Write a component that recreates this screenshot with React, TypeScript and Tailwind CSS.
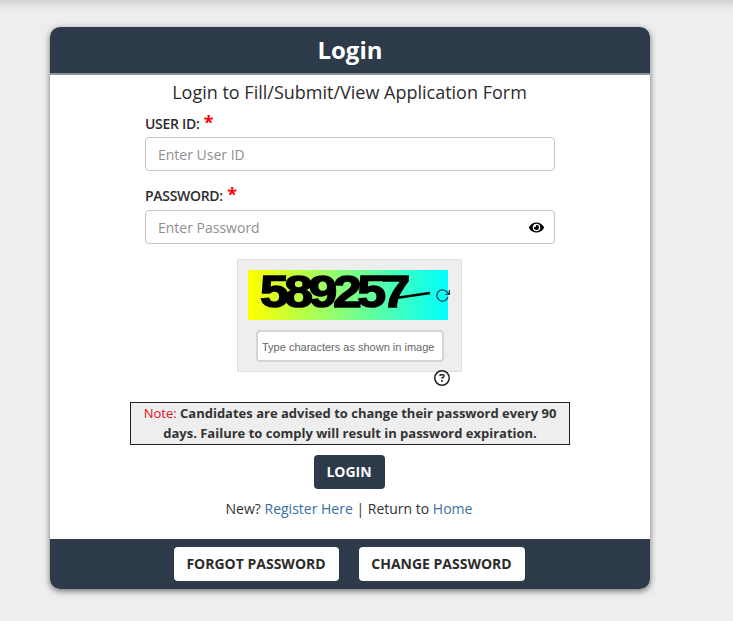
import { FaEye } from 'react-icons/fa';
import { FiRotateCw } from 'react-icons/fi';
import { FaRegCircleQuestion } from 'react-icons/fa6';

export default function App() {
  return (
    <div className="min-h-[621px] overflow-hidden bg-[#eeeeee] font-['Open_Sans',sans-serif] text-[#2b2b2b]">
      <div className="h-[10px] bg-gradient-to-b from-[#d2d2d2] to-[#eeeeee]" />
      <div className="mx-[50px] mt-[17px] w-[600px] overflow-hidden rounded-[10px] bg-white shadow-[0_2px_6px_rgba(0,0,0,0.55)]">
        <div className="flex h-[48px] items-center justify-center border-b-2 border-[#8b949c] bg-[#2c3a49] text-[24px] font-bold text-white">
          Login
        </div>
        <div className="flex flex-col items-center">
          <h1 className="mt-[4px] mr-[1px] text-[18px] leading-[27px] text-[#2b2b2b]">Login to Fill/Submit/View Application Form</h1>
          <div className="w-[410px]">
            <label className="mt-[3px] block h-[28px] text-[14px] leading-[27px] font-semibold tracking-[-0.3px]">
              USER ID: <span className="ml-px text-[18px] font-bold text-[#ff0000]">*</span>
            </label>
            <div className="flex h-[34px] items-center rounded-[4px] border border-[#c4c4c4] px-3 text-[14px] text-[#8f8f8f]">
              Enter User ID
            </div>
            <label className="mt-[11px] block h-[28px] text-[14px] leading-[25px] font-semibold tracking-[-0.3px]">
              PASSWORD: <span className="ml-px text-[18px] font-bold text-[#ff0000]">*</span>
            </label>
            <div className="flex h-[34px] items-center justify-between rounded-[4px] border border-[#c4c4c4] pr-[10px] pl-3 text-[14px] text-[#8f8f8f]">
              Enter Password
              <FaEye className="text-[15px] text-black" />
            </div>
          </div>
          <div className="mt-[15px] mr-[1px] flex h-[113px] w-[225px] flex-col items-start rounded-[2px] border border-[#dddddd] bg-[#eeeeee] pt-[10px] pl-[10px]">
            <div className="relative flex h-[50px] w-[200px] items-center bg-linear-to-r/srgb from-[#ffff00] to-[#00ffff] pb-[7px] pl-[12px] font-['Liberation_Sans',sans-serif] text-[45px] font-bold text-black">
              <span className="inline-block origin-left scale-x-[1.15] tracking-[-3.9px] [-webkit-text-stroke:1.5px_black]">589257</span>
              <svg className="absolute top-0 left-0" width="200" height="50" viewBox="0 0 200 50">
                <path d="M148 28 L182 23" stroke="#000" strokeWidth="2.5" />
              </svg>
              <FiRotateCw className="absolute top-[18px] left-[187px] text-[15px] text-[#163f4d]" />
            </div>
            <div className="mt-[10px] ml-[8px] flex h-[32px] w-[188px] items-center rounded-[4px] border-2 border-[#d4d4d4] bg-white pt-[3px] pl-[4px] font-['Liberation_Sans',sans-serif] text-[11px] whitespace-nowrap text-[#666666]">
              Type characters as shown in image
            </div>
          </div>
          <div className="mr-[1px] -mt-[2px] flex h-[24px] w-[225px] justify-end pr-[12px]">
            <FaRegCircleQuestion className="text-[16px] text-[#222222]" />
          </div>
          <div className="mt-[8px] w-[440px] border border-[#222222] bg-[#eeeeee] pb-px text-center text-[13px] leading-[20px] font-bold text-[#333333]">
            <span className="font-normal text-[#e0101c]">Note:</span> Candidates are advised to change their password every 90 days. Failure to comply will result in password expiration.
          </div>
          <button className="mt-[10px] mr-[2px] h-[34px] w-[71px] rounded-[4px] bg-[#2c3a49] pb-[2px] text-[14px] font-bold text-white">LOGIN</button>
          <p className="mt-[10px] mr-[2px] text-[14px] leading-[20px] text-[#333333]">
            New? <a className="text-[#3a6f9f]">Register Here</a> | Return to <a className="text-[#3a6f9f]">Home</a>
          </p>
          <div className="mt-[20px] flex h-[50px] w-full items-center justify-center gap-5 bg-[#2c3a49] pr-[2px]">
            <button className="h-[34px] w-[165px] rounded-[4px] bg-white pb-[2px] text-[14px] font-bold text-[#2b2b2b]">FORGOT PASSWORD</button>
            <button className="h-[34px] w-[166px] rounded-[4px] bg-white pb-[2px] text-[14px] font-bold text-[#2b2b2b]">CHANGE PASSWORD</button>
          </div>
        </div>
      </div>
    </div>
  );
}
